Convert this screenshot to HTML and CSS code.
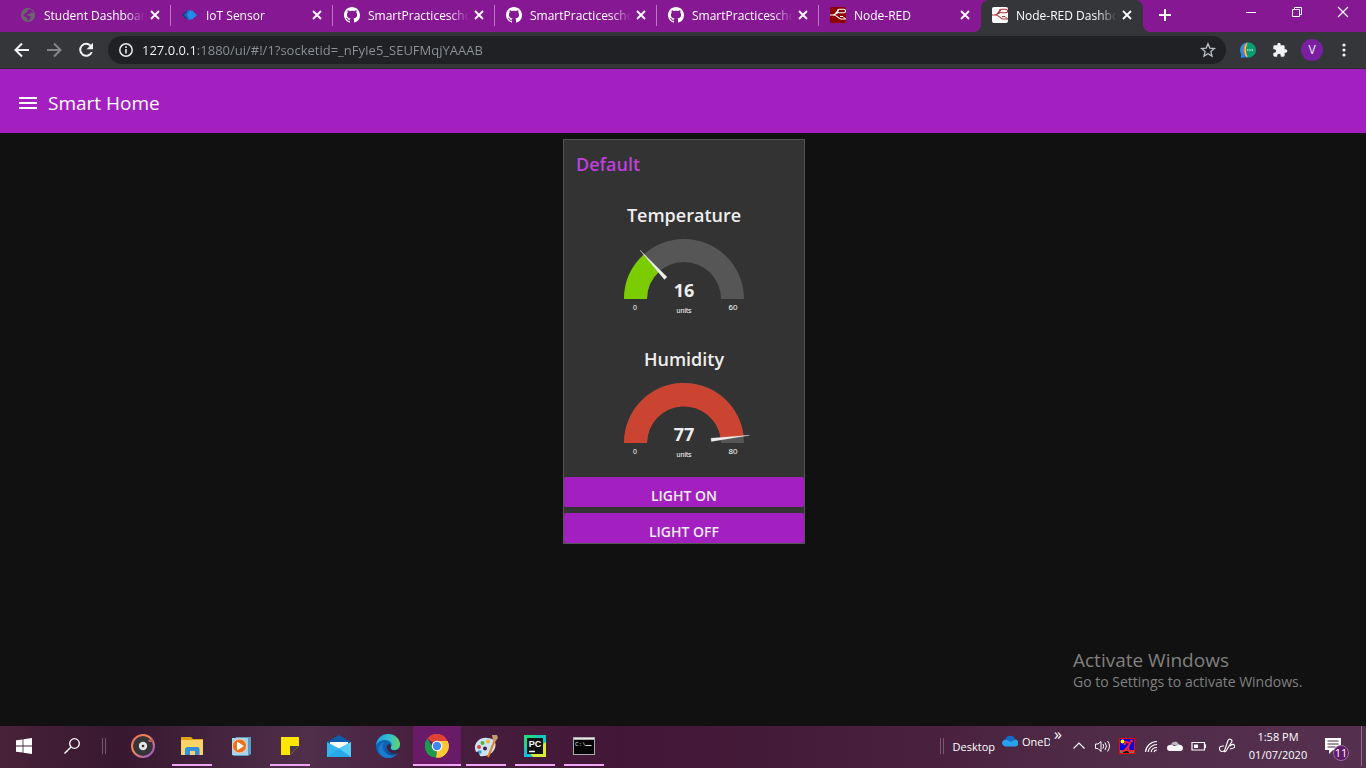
FILE: index.html
```html
<!DOCTYPE html>
<html lang="en">
<head>
<meta charset="utf-8">
<meta name="viewport" content="width=device-width, initial-scale=1">
<title>Node-RED Dashboard</title>
<link rel="stylesheet" href="styles.css">
</head>
<body>
<svg class="defs" aria-hidden="true">
  <symbol id="close" viewBox="0 0 16 16"><path d="M4 4l8 8M12 4l-8 8" stroke="currentColor" stroke-width="1.8" fill="none"/></symbol>
  <symbol id="github" viewBox="0 0 16 16"><path fill="currentColor" d="M8 0C3.58 0 0 3.58 0 8c0 3.54 2.29 6.53 5.47 7.59.4.07.55-.17.55-.38 0-.19-.01-.82-.01-1.49-2.01.37-2.53-.49-2.69-.94-.09-.23-.48-.94-.82-1.13-.28-.15-.68-.52-.01-.53.63-.01 1.08.58 1.23.82.72 1.21 1.87.87 2.33.66.07-.52.28-.87.51-1.07-1.78-.2-3.64-.89-3.64-3.95 0-.87.31-1.59.82-2.15-.08-.2-.36-1.02.08-2.12 0 0 .67-.21 2.2.82.64-.18 1.32-.27 2-.27s1.36.09 2 .27c1.53-1.04 2.2-.82 2.2-.82.44 1.1.16 1.92.08 2.12.51.56.82 1.27.82 2.15 0 3.07-1.87 3.75-3.65 3.95.29.25.54.73.54 1.48 0 1.07-.01 1.93-.01 2.2 0 .21.15.46.55.38A8.01 8.01 0 0 0 16 8c0-4.42-3.58-8-8-8z"/></symbol>
  <symbol id="flow" viewBox="0 0 16 16"><path d="M0 8h3c3 0 3-4.500 6-4.500M3 8c5 0 5 4 8 4h5M8 5.500c-2 1-2 2.500-5 2.500" fill="none" stroke="currentColor" stroke-width="1.100"/><rect x="7.500" y="2.200" width="8" height="3.600" rx="1.600" fill="none" stroke="currentColor" stroke-width="1.100"/><path d="M10 9.500h3l2.500 2.500" fill="none" stroke="currentColor" stroke-width="1"/></symbol>
</svg>

<div class="window">
  <header class="tabstrip">
    <nav class="tabs" aria-label="Tabs">
      <div class="tab">
        <svg class="favicon" viewBox="0 0 16 16"><circle cx="8" cy="8" r="7" fill="#68676b"/><path d="M9 2c2 0 4 2 4.500 4l-2.500-.5-1.500 1.500L7 7l.5 1.500 3 .5-.5 3-2 2-1-3-2.500-1.500L2 7l2 1 1-2 2-.5V4z" fill="#861894"/></svg>
        <a class="tab-title" href="#student">Student Dashboard</a>
        <button class="tab-close" aria-label="Close tab"><svg viewBox="0 0 16 16"><use href="#close"/></svg></button>
      </div>
      <div class="tab">
        <svg class="favicon" viewBox="0 0 16 16"><path d="M5 8l1-2.500L8.500 3l1 1L11 3.500l.5 2 2 .5v1.500L16 8l-2.500.8V10l-2 .5-.5 2-1.500-.5-1 1L6 10.500z" fill="#1e8fe8"/><path d="M7.500 3L3 8l4.500 5" fill="none" stroke="#1273bd" stroke-width="1.600"/><path d="M4.500 4.500L1 8l3.500 3.500" fill="none" stroke="#123f7c" stroke-width="1.400"/></svg>
        <a class="tab-title" href="#iot">IoT Sensor</a>
        <button class="tab-close" aria-label="Close tab"><svg viewBox="0 0 16 16"><use href="#close"/></svg></button>
      </div>
      <div class="tab">
        <svg class="favicon" viewBox="0 0 16 16"><use href="#github"/></svg>
        <a class="tab-title" href="#repo1">SmartPracticeschool</a>
        <button class="tab-close" aria-label="Close tab"><svg viewBox="0 0 16 16"><use href="#close"/></svg></button>
      </div>
      <div class="tab">
        <svg class="favicon" viewBox="0 0 16 16"><use href="#github"/></svg>
        <a class="tab-title" href="#repo2">SmartPracticeschool</a>
        <button class="tab-close" aria-label="Close tab"><svg viewBox="0 0 16 16"><use href="#close"/></svg></button>
      </div>
      <div class="tab">
        <svg class="favicon" viewBox="0 0 16 16"><use href="#github"/></svg>
        <a class="tab-title" href="#repo3">SmartPracticeschool</a>
        <button class="tab-close" aria-label="Close tab"><svg viewBox="0 0 16 16"><use href="#close"/></svg></button>
      </div>
      <div class="tab tab-last">
        <svg class="favicon favicon-editor" viewBox="0 0 16 16"><use href="#flow"/></svg>
        <a class="tab-title" href="#editor">Node-RED</a>
        <button class="tab-close" aria-label="Close tab"><svg viewBox="0 0 16 16"><use href="#close"/></svg></button>
      </div>
      <div class="tab tab-active">
        <svg class="favicon favicon-dashboard" viewBox="0 0 16 16"><use href="#flow"/></svg>
        <a class="tab-title" href="#dashboard" aria-current="page">Node-RED Dashboard</a>
        <button class="tab-close" aria-label="Close tab"><svg viewBox="0 0 16 16"><use href="#close"/></svg></button>
      </div>
      <button class="new-tab" aria-label="New tab"><svg viewBox="0 0 16 16"><path d="M8 2v12M2 8h12" stroke="currentColor" stroke-width="2"/></svg></button>
    </nav>
    <div class="window-controls">
      <button aria-label="Minimize"><svg viewBox="0 0 12 12"><path d="M1 6.500h10" stroke="currentColor"/></svg></button>
      <button aria-label="Restore"><svg viewBox="0 0 12 12"><path d="M1.500 3.500h7v7h-7zM3.500 3.500v-2h7v7h-2" fill="none" stroke="currentColor"/></svg></button>
      <button aria-label="Close window"><svg viewBox="0 0 12 12"><path d="M1 1l10 10M11 1L1 11" stroke="currentColor" stroke-width="1.200"/></svg></button>
    </div>
  </header>

  <div class="toolbar">
    <div class="tool-group">
      <button class="tool" aria-label="Back"><svg viewBox="0 0 16 16"><path d="M15 8H2M8 1.500L1.500 8 8 14.500" fill="none" stroke="currentColor" stroke-width="2"/></svg></button>
      <button class="tool tool-off" aria-label="Forward"><svg viewBox="0 0 16 16"><path d="M1 8h13M8 1.500L14.500 8 8 14.500" fill="none" stroke="currentColor" stroke-width="2"/></svg></button>
      <button class="tool" aria-label="Reload"><svg viewBox="0 0 16 16"><path d="M13.200 4.500A6 6 0 1 0 13.800 10" fill="none" stroke="currentColor" stroke-width="2"/><path d="M15 .8v6.400H8.600z" fill="currentColor"/></svg></button>
    </div>
    <div class="address">
      <button class="address-button" aria-label="Site information"><svg viewBox="0 0 16 16"><circle cx="8" cy="8" r="6.200" fill="none" stroke="currentColor" stroke-width="1.500"/><path d="M8 7v4.500M8 4.300v1.600" stroke="currentColor" stroke-width="1.600"/></svg></button>
      <input class="url" type="text" aria-label="Address" value="127.0.0.1:1880/ui/#!/1?socketid=_nFyIe5_SEUFMqjYAAAB">
      <button class="address-button star" aria-label="Bookmark"><svg viewBox="0 0 16 16"><path d="M8 1.800l1.800 4.300 4.700.4-3.600 3 1.100 4.600L8 11.700l-4 2.400 1.100-4.600-3.600-3 4.700-.4z" fill="none" stroke="currentColor" stroke-width="1.300"/></svg></button>
    </div>
    <div class="tool-group">
      <button class="tool" aria-label="Chat extension"><svg viewBox="0 0 16 16"><circle cx="7.500" cy="8" r="7.500" fill="#1899dd"/><path d="M1 10v6l6-1z" fill="#1e88e5"/><path d="M7 .6a8 8 0 0 0-4 7.400 8 8 0 0 0 4 7.400z" fill="#e84a9a"/><path d="M7.500.5a8 8 0 0 0-3 7.500 8 8 0 0 0 3 7.500z" fill="#ffc928"/><path d="M8.500.5a7.500 7.500 0 0 1 0 15c-3.500-3-3.500-12 0-15z" fill="#0a9f72"/><path d="M7 8h1.500M9.300 8h1.400M11.500 8H13" stroke="#fff" stroke-width="1.200"/></svg></button>
      <button class="tool" aria-label="Extensions"><svg viewBox="0 0 24 24"><path fill="currentColor" d="M20.500 11H19V7a2 2 0 0 0-2-2h-4V3.500a2.500 2.500 0 0 0-5 0V5H4a2 2 0 0 0-2 2v3.800h1.500a2.700 2.700 0 0 1 0 5.400H2V20c0 1.100.9 2 2 2h3.800v-1.500a2.700 2.700 0 0 1 5.400 0V22H17a2 2 0 0 0 2-2v-4h1.500a2.500 2.500 0 0 0 0-5z"/></svg></button>
      <button class="tool" aria-label="Profile"><span class="avatar">V</span></button>
      <button class="tool" aria-label="Menu"><svg viewBox="0 0 16 16" fill="currentColor"><circle cx="8" cy="3" r="1.600"/><circle cx="8" cy="8" r="1.600"/><circle cx="8" cy="13" r="1.600"/></svg></button>
    </div>
  </div>

  <div class="app-bar">
    <button class="burger" aria-label="Open menu"><svg viewBox="0 0 18 12"><path d="M0 1h18M0 6h18M0 11h18" stroke="currentColor" stroke-width="2"/></svg></button>
    <h1 class="app-title">Smart Home</h1>
  </div>

  <main class="page">
    <section class="card">
      <h2 class="card-title">Default</h2>
      <div class="gauge">
        <h3 class="gauge-title">Temperature</h3>
        <svg class="dial" viewBox="0 0 132 84" role="img" aria-label="Temperature 16 of 60 units">
          <path d="M6 64A60 60 0 0 1 126 64H103A37 37 0 0 0 29 64Z" fill="#565656"/>
          <path d="M6 64A60 60 0 0 1 25.900 19.400L41.300 36.500A37 37 0 0 0 29 64Z" fill="#7bcd00"/>
          <path class="needle" d="M49 42.100L46.400 44.400L22 15.100Z"/>
          <text class="dial-value" x="66" y="62">16</text>
          <text class="dial-unit" x="66" y="78">units</text>
          <text class="dial-unit" x="17" y="75">0</text>
          <text class="dial-limit" x="115" y="75">60</text>
        </svg>
      </div>
      <div class="gauge">
        <h3 class="gauge-title">Humidity</h3>
        <svg class="dial" viewBox="0 0 132 84" role="img" aria-label="Humidity 77 of 80 units">
          <path d="M6 64A60 60 0 0 1 126 64H103A37 37 0 0 0 29 64Z" fill="#565656"/>
          <path d="M6 64A60 60 0 0 1 125.600 57L102.700 59.700A37 37 0 0 0 29 64Z" fill="#cb4432"/>
          <path class="needle" d="M93 59.200L93.400 62.400L131.300 56.300Z"/>
          <text class="dial-value" x="66" y="62">77</text>
          <text class="dial-unit" x="66" y="78">units</text>
          <text class="dial-unit" x="17" y="75">0</text>
          <text class="dial-limit" x="115" y="75">80</text>
        </svg>
      </div>
      <div class="actions">
        <button class="action">LIGHT ON</button>
        <button class="action">LIGHT OFF</button>
      </div>
    </section>
    <aside class="watermark">
      <p class="watermark-title">Activate Windows</p>
      <p class="watermark-text">Go to Settings to activate Windows.</p>
    </aside>
  </main>

  <footer class="taskbar">
    <div class="launch">
      <button class="task" aria-label="Start"><svg class="i16" viewBox="0 0 16 16"><path fill="#fff" d="M0 2.300l6.600-.9v6.200H0zM7.400 1.300L16 0v7.600H7.400zM0 8.400h6.600v6.200L0 13.700zM7.400 8.400H16V16l-8.600-1.200z"/></svg></button>
      <button class="task" aria-label="Search"><svg class="i16" viewBox="0 0 16 16"><circle cx="10.500" cy="5.500" r="4.800" fill="none" stroke="#fff" stroke-width="1.300"/><path d="M7 9L.5 15.500" stroke="#fff" stroke-width="1.400"/></svg></button>
    </div>
    <span class="grip"></span>
    <div class="apps">
      <button class="task" aria-label="Music"><svg viewBox="0 0 24 24"><defs><linearGradient id="ring" x2="1" y2="1"><stop offset="0" stop-color="#ef6a62"/><stop offset=".4" stop-color="#f08a55"/><stop offset="1" stop-color="#8c55d8"/></linearGradient></defs><circle cx="12" cy="12" r="11" fill="#353538" stroke="url(#ring)" stroke-width="2"/><circle cx="12" cy="12" r="4.200" fill="#e4e4e4"/><circle cx="12" cy="12" r="1.300" fill="#333"/><path d="M17 6l5-1.500v3.500h-4z" fill="#c75a52"/></svg></button>
      <button class="task running" aria-label="File Explorer"><svg viewBox="0 0 24 24"><path d="M1 3h10l2 2h10v16H1z" fill="#e3a313"/><path d="M1 6h22v15H1z" fill="#fbd468"/><path d="M5 21v-6.500L7 13h11l1.500 1.500V21H15v-4h-5v4z" fill="#3390dc"/></svg></button>
      <button class="task" aria-label="Media Player"><svg viewBox="0 0 24 24"><path d="M7 3h15v17l-3 2H4z" fill="#5b9cc2"/><path d="M3 4h16v17H3z" fill="#a6d4ec"/><circle cx="10.500" cy="12" r="7" fill="#f0711c" stroke="#efcfb8"/><path d="M8 7.500l7 4.500-7 4.500z" fill="#fff"/></svg></button>
      <button class="task running" aria-label="Sticky Notes"><svg viewBox="0 0 24 24"><path d="M3 3h18v9l-9 9H3z" fill="#ffe600"/><path d="M12 12h9l-9 9z" fill="#4b3a4c"/></svg></button>
      <button class="task" aria-label="Mail"><svg viewBox="0 0 24 24"><path d="M0 8L12 1l12 7v6H0z" fill="#0b5caa"/><path d="M3 8h18v8H3z" fill="#fff"/><path d="M0 8l12 6.500L24 8v15H0z" fill="#35b5ee"/><path d="M0 23l24-15v15z" fill="#55cdf8"/><path d="M0 23l12-8.500L24 23z" fill="#28a8e8"/></svg></button>
      <button class="task" aria-label="Edge"><svg viewBox="0 0 24 24"><defs><linearGradient id="wave"><stop offset="0" stop-color="#239ce0"/><stop offset=".6" stop-color="#35c1d0"/><stop offset="1" stop-color="#63d858"/></linearGradient></defs><circle cx="12" cy="12" r="12" fill="#0f64b2"/><path d="M0 11C1 4 6 0 12 0c7 0 12 5 12 10 0 4-3 6-6 6s-4-1.500-3-3c2-3-.500-7-6-7-4 0-7 2-9 5z" fill="url(#wave)"/><path d="M8 8c-4 6 1 13 8 13 2 0 4-.5 5-1-4 5-12 5-16 1C0 16 3 10 8 8z" fill="#1a7bd0"/><path d="M9 12c0 6 6 9 13 6l-2 2.500C13 24 8 18 9 12z" fill="#0a4d94"/><path d="M13 10c3 1 2 3 1.500 4 0 2 3 3 6 2 1.500 0 2.500-1 3.500-2v4l-2 1c-5 1.500-9 0-11-4-1-2 0-4 2-5z" fill="#42203b"/></svg></button>
      <button class="task running current" aria-label="Chrome"><svg viewBox="0 0 24 24"><path d="M12 12L2.500 4.500A11.500 11.500 0 0 1 22.500 7H12z" fill="#e04236"/><path d="M12 12L22.500 7A11.500 11.500 0 0 1 11 23.500z" fill="#fcc934"/><path d="M12 12L11 23.500A11.500 11.500 0 0 1 2.500 4.500L8 14z" fill="#1e9950"/><path d="M12 7h10.500a11.500 11.500 0 0 1-11.500 16.500L16.500 14z" fill="#fcc934"/><circle cx="12" cy="12" r="5.300" fill="#fff"/><circle cx="12" cy="12" r="4.200" fill="#4286f5"/></svg></button>
      <button class="task running" aria-label="Paint"><svg viewBox="0 0 24 24"><path d="M1 15C0 8 7 3 13 4c7 0 10 5 8 10-2 6-9 9-15 8l-1-3 1-2-4 1z" fill="#cbe3f2"/><circle cx="5" cy="13" r="2" fill="#e3453a"/><circle cx="8.500" cy="9" r="2" fill="#57ae38"/><circle cx="14" cy="7.500" r="2" fill="#f2b632"/><circle cx="11" cy="14.500" r="2" fill="#3d244c"/><circle cx="6" cy="18" r="1.800" fill="#35a0dc"/><path d="M20.500 7L14 23" stroke="#e78324" stroke-width="2"/><path d="M18 1l5 0 1 3-3 4-2-1z" fill="#c69a6a"/></svg></button>
      <button class="task running" aria-label="PyCharm"><svg viewBox="0 0 24 24"><path d="M1 1h22v22H1z" fill="#21d789"/><path d="M12 1h11v14z" fill="#15c6c2"/><path d="M1 23l22-15v15z" fill="#d9ed38"/><path d="M1 12v11h9z" fill="#18bfd8"/><path d="M4 4h16v16H4z" fill="#111"/><path d="M6 17.500h6" stroke="#fff" stroke-width="1.500"/><text class="pc" x="12" y="13">PC</text></svg></button>
      <button class="task running" aria-label="Command Prompt"><svg viewBox="0 0 24 24"><path d="M1 3h22v18H1z" fill="#aaa"/><path d="M2 6h20v14H2z" fill="#050505"/><path d="M2 4h20v1H2z" fill="#e8e8e8"/><text class="prompt" x="3" y="12">C:\</text><path d="M13.500 11.500h6" stroke="#ddd"/></svg></button>
    </div>

    <div class="tray">
      <span class="grip"></span>
      <a class="band" href="#desktop">Desktop</a>
      <a class="band band-drive" href="#onedrive"><svg viewBox="0 0 16 12"><path d="M3 9a3.500 3.500 0 0 1 .5-5A5 5 0 0 1 13 4.500L8 8z" fill="#0f6cc8"/><path d="M1 10a3 3 0 0 1 3-5c2 0 3 1 5 2l4-2.500a3.600 3.600 0 0 1 1 7H3.500a3 3 0 0 1-2.500-1.500z" fill="#27a1ec"/></svg><span class="band-label">OneDrive</span></a>
      <button class="overflow" aria-label="More">»</button>
      <button class="tray-icon" aria-label="Show hidden icons"><svg viewBox="0 0 16 16"><path d="M2.500 10.500L8 5l5.500 5.500" fill="none" stroke="currentColor" stroke-width="1.200"/></svg></button>
      <button class="tray-icon" aria-label="Volume"><svg viewBox="0 0 16 16"><path d="M.5 6v4.500H3l3 3v-10L3 6zM8 6q1.500 2 0 4.500M10 4.500q3 3.500 0 7.500M12.500 3q4 5 0 10.500" fill="none" stroke="currentColor"/></svg></button>
      <button class="tray-icon" aria-label="Display utility"><svg viewBox="0 0 16 16"><path d="M0 0h16v16H0z" fill="#f00"/><path d="M1 1h14v14H1z" fill="#0000e8"/><path d="M1 12h14v3H1z" fill="#777"/><path d="M4 13h6v2H4z" fill="#111"/><circle cx="3.500" cy="3.500" r="2" fill="#ff0"/><circle cx="12.500" cy="3" r="1.500" fill="#f22"/><path d="M11.500 4.500L9 9l1 4h4M9 9l-4 4H3M11 5L7 4 5 7" fill="none" stroke="#f22" stroke-width="2"/></svg></button>
      <button class="tray-icon" aria-label="Wi-Fi"><svg viewBox="0 0 16 16"><path d="M2.500 14A11.500 11.500 0 0 1 14 3.500M5 14A9 9 0 0 1 14 6.500M8 14A6 6 0 0 1 14 9.500M11 14a3 3 0 0 1 3-2" fill="none" stroke="currentColor" stroke-width="1.100"/></svg></button>
      <button class="tray-icon" aria-label="Cloud"><svg viewBox="0 0 16 16"><path d="M4 6.500A4 4 0 0 1 11.500 6L14 8z" fill="#bdb5bc"/><path d="M3 13a3 3 0 0 1 0-6c2-.5 3 .5 4 1l4-1c3-1 5 1 5 3s-1 3-2.500 3z" fill="#f5f5f5"/></svg></button>
      <button class="tray-icon" aria-label="Battery"><svg viewBox="0 0 16 16"><path d="M1 4.500h12.500v7.500H1zM14.500 6.500v3.500" fill="none" stroke="currentColor" stroke-width="1.200"/><path d="M3 6.500h4v3.500H3z" fill="currentColor"/></svg></button>
      <button class="tray-icon tray-pen" aria-label="Pen"><svg viewBox="0 0 16 16"><path d="M5 14L9 2.500Q10 .5 12 1.500T12 5L7 13l-2 1M5 8Q0 7.500.5 11T5 13M11 8q3-3 4.500-.5T11 11" fill="none" stroke="currentColor" stroke-width="1.100"/></svg></button>
      <time class="clock" datetime="2020-07-01T13:58"><span>1:58 PM</span><span>01/07/2020</span></time>
      <button class="notice" aria-label="11 notifications"><svg viewBox="0 0 16 16"><path d="M0 0h16v12H8l-4 4v-4H0z" fill="#fff"/><path d="M2.500 3h11M2.500 6h11M2.500 9h8" stroke="#4d2a46"/></svg><span class="badge">11</span></button>
      <button class="show-desktop" aria-label="Show desktop"></button>
    </div>
  </footer>
</div>
</body>
</html>
```
FILE: styles.css
```css
* {
  box-sizing: border-box;
}

body {
  margin: 0;
  font-family: "Open Sans", "Noto Sans", sans-serif;
  font-size: 12px;
  color: #fff;
  background: #111;
}

h1, h2, h3, p {
  margin: 0;
}

button {
  display: flex;
  align-items: center;
  justify-content: center;
  padding: 0;
  border: 0;
  background: none;
  color: inherit;
  font: inherit;
}

a {
  color: inherit;
  text-decoration: none;
}

svg {
  display: block;
  flex: none;
}

.defs {
  position: absolute;
  width: 0;
  height: 0;
}

.window {
  display: flex;
  flex-direction: column;
  min-height: 100vh;
}

/* Tab strip */

.tabstrip {
  display: flex;
  justify-content: space-between;
  height: 32px;
  background: #861894;
}

.tabs {
  display: flex;
  flex: 1;
  min-width: 0;
  padding-left: 9px;
}

.tab {
  position: relative;
  display: flex;
  flex: 0 1 162px;
  align-items: center;
  min-width: 0;
  padding: 0 8px 2px 11px;
}

.tab::after {
  content: "";
  position: absolute;
  top: 5px;
  right: 0;
  width: 1px;
  height: 21px;
  background: #b978c1;
}

.tab-last::after {
  display: none;
}

.favicon {
  width: 16px;
  height: 16px;
  margin-right: 8px;
  border-radius: 2px;
}

.favicon-editor {
  background: #8f0000;
  color: #fff;
}

.favicon-dashboard {
  background: #fff;
  color: #a33;
}

.tab-title {
  flex: 1;
  min-width: 0;
  margin-right: 2px;
  overflow: hidden;
  white-space: nowrap;
  mask-image: linear-gradient(to left, transparent, #000 20px);
}

.tab-close,
.tab-close svg {
  width: 16px;
  height: 16px;
}

.tab-active {
  background: #35363a;
  border-radius: 8px 8px 0 0;
}

.tab-active::before,
.tab-active::after {
  content: "";
  position: absolute;
  top: auto;
  bottom: 0;
  width: 8px;
  height: 8px;
}

.tab-active::before {
  left: -8px;
  background: radial-gradient(circle at 0 0, transparent 8px, #35363a 8px);
}

.tab-active::after {
  right: -8px;
  background: radial-gradient(circle at 100% 0, transparent 8px, #35363a 8px);
}

.new-tab {
  width: 28px;
  height: 30px;
  margin-left: 8px;
}

.new-tab svg {
  width: 16px;
  height: 16px;
}

.window-controls {
  display: flex;
}

.window-controls button {
  width: 46px;
  height: 24px;
}

.window-controls svg {
  width: 12px;
  height: 12px;
}

/* Toolbar */

.toolbar {
  display: flex;
  align-items: center;
  gap: 6px;
  height: 37px;
  padding: 0 6px;
  background: #35363a;
  border-bottom: 1px solid #28292b;
}

.tool-group {
  display: flex;
}

.tool {
  width: 32px;
  height: 28px;
  color: #f1f3f4;
}

.tool svg {
  width: 16px;
  height: 16px;
}

.tool-off {
  color: #85868a;
}

.avatar {
  width: 22px;
  height: 22px;
  border-radius: 50%;
  background: #7b1fa2;
  line-height: 22px;
}

.address {
  display: flex;
  flex: 1;
  align-items: center;
  min-width: 0;
  height: 28px;
  padding: 0 10px;
  border-radius: 14px;
  background: #202124;
}

.address-button,
.address-button svg {
  width: 16px;
  height: 16px;
}

.address-button {
  color: #e8eaed;
}

.star {
  color: #bdc1c6;
}

.url {
  flex: 1;
  min-width: 0;
  height: 24px;
  margin: 0 8px;
  padding: 0;
  border: 0;
  background: linear-gradient(to right, #fff 55px, #8f9398 55px);
  background-clip: text;
  color: transparent;
  font: inherit;
  font-size: 13px;
}

/* Dashboard */

.app-bar {
  display: flex;
  align-items: center;
  gap: 11px;
  height: 64px;
  padding: 4px 19px 0;
  background: #a31fbf;
}

.burger {
  height: 32px;
}

.burger svg {
  width: 18px;
  height: 12px;
}

.app-title {
  font-size: 19px;
  font-weight: 400;
}

.page {
  position: relative;
  display: flex;
  flex: 1;
  flex-direction: column;
  align-items: center;
  padding: 6px 6px 6px 8px;
}

.card {
  width: 242px;
  border: 1px solid #555;
  background: #333;
}

.card-title {
  padding: 12px;
  color: #bf40da;
  font-size: 18px;
  font-weight: 600;
  line-height: 24px;
}

.gauge {
  display: flex;
  flex-direction: column;
  align-items: center;
  height: 144px;
  padding-top: 15px;
}

.gauge-title {
  color: #eee;
  font-size: 18px;
  font-weight: 600;
  line-height: 24px;
}

.dial {
  width: 132px;
  height: 84px;
  margin-top: 8px;
  fill: #eee;
  text-anchor: middle;
}

.dial-value {
  font-size: 18px;
  font-weight: 700;
}

.dial-unit,
.dial-limit {
  fill: #fff;
  font-family: "Liberation Sans", sans-serif;
  font-size: 7px;
}

.dial-limit {
  font-size: 8px;
}

.needle {
  fill: #eee;
  stroke: #eee;
  stroke-width: 0.3;
}

.actions {
  display: flex;
  flex-direction: column;
  gap: 6px;
  margin-top: 1px;
}

.action {
  height: 30px;
  padding-top: 6px;
  border-radius: 2px;
  background: #a31fbf;
  color: #eee;
  font-size: 14px;
  font-weight: 600;
}

.watermark {
  position: absolute;
  right: 57px;
  bottom: 34px;
  width: 236px;
  color: #808080;
}

.watermark-title {
  font-size: 19px;
  line-height: 24px;
}

.watermark-text {
  font-size: 14px;
  line-height: 20px;
}

/* Taskbar */

.taskbar {
  display: flex;
  align-items: flex-start;
  height: 42px;
  background: linear-gradient(to right, #482239, #371830 120px, #502f4b 310px, #48203f 420px, #421636 620px, #481f3d 900px, #502c49 1100px, #55314f);
}

.launch,
.apps,
.tray {
  display: flex;
  align-items: center;
  height: 40px;
}

.task {
  position: relative;
  width: 48px;
  height: 40px;
}

.task svg {
  width: 24px;
  height: 24px;
}

.task .i16 {
  width: 16px;
  height: 16px;
}

.apps {
  gap: 1px;
  margin-left: 13px;
}

.running::after {
  content: "";
  position: absolute;
  bottom: 0;
  left: 4px;
  right: 4px;
  height: 2px;
  background: #f0a5f5;
}

.current {
  background: #6a1b68;
}

.current::after {
  left: 0;
  right: 0;
}

.grip {
  width: 4px;
  height: 16px;
  margin: 12px 0 12px 6px;
  border: solid #765b70;
  border-width: 0 1px;
}

.pc {
  fill: #fff;
  font-family: "Liberation Sans", sans-serif;
  font-size: 9px;
  font-weight: 700;
  text-anchor: middle;
}

.prompt {
  fill: #ddd;
  font-family: "Liberation Mono", monospace;
  font-size: 6px;
}

.tray {
  margin-left: auto;
  font-size: 11px;
}

.band {
  display: flex;
  gap: 4px;
  margin-left: 9px;
}

.band-drive {
  align-items: center;
  width: 48px;
  height: 16px;
  margin: 0 3px 10px 7px;
}

.band-drive svg {
  width: 16px;
  height: 12px;
}

.band-label {
  overflow: hidden;
}

.overflow {
  width: 10px;
  height: 20px;
  margin-right: 4px;
  margin-bottom: 24px;
  font-size: 16px;
}

.tray-icon {
  width: 24px;
  height: 40px;
}

.tray-icon svg {
  width: 16px;
  height: 16px;
}

.tray-pen {
  width: 32px;
}

.clock {
  display: flex;
  flex-direction: column;
  align-items: center;
  width: 70px;
  line-height: 18px;
}

.notice {
  position: relative;
  width: 48px;
  height: 40px;
  padding-right: 8px;
}

.notice svg {
  width: 16px;
  height: 16px;
}

.badge {
  position: absolute;
  right: 12px;
  bottom: 5px;
  width: 16px;
  height: 16px;
  border: 1px solid #a06aa5;
  border-radius: 50%;
  background: #5d1a66;
  font-size: 11px;
  line-height: 14px;
}

.show-desktop {
  width: 5px;
  height: 40px;
  border-left: 1px solid #8a7087;
}
```
